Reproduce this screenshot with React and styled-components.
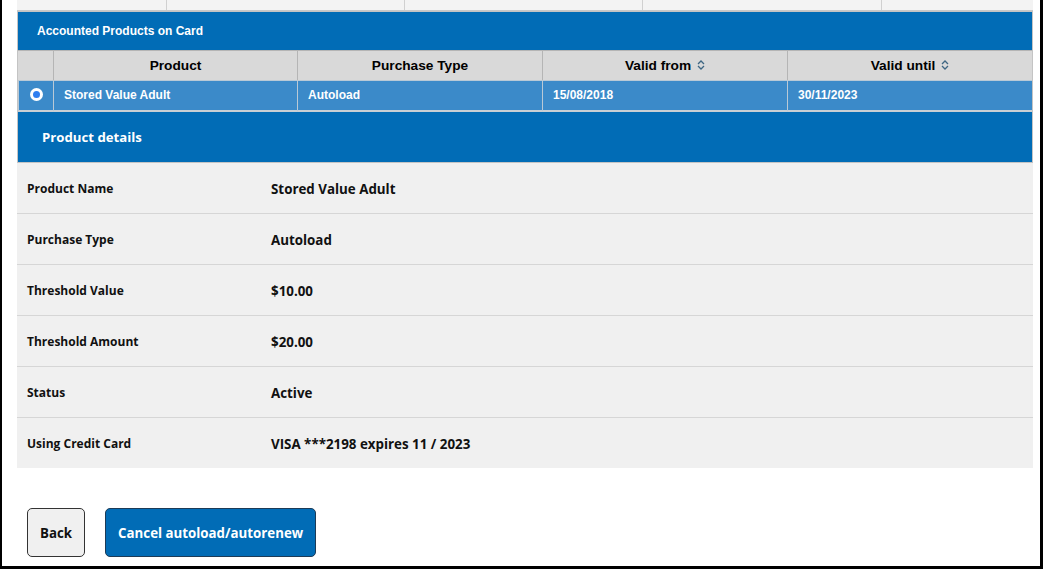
import React from "react";
import styled, { createGlobalStyle } from "styled-components";

const GlobalStyle = createGlobalStyle`
  html, body {
    margin: 0;
    padding: 0;
    background: #fff;
  }
`;

// Frame around the shot
const Frame = styled.div`
  width: 1043px;
  height: 569px;
  box-sizing: border-box;
  border-left: 2px solid #000;
  border-right: 3px solid #000;
  border-bottom: 3px solid #000;
  padding: 0 7px 0 15px;
  overflow: hidden;
  background: #fff;
`;

const TopStrip = styled.div`
  display: grid;
  grid-template-columns: 150px 238px 238px 239px 1fr;
  height: 10px;
  border-bottom: 1px solid #c8c8c8;
  background: #f3f3f3;
`;

const StripCell = styled.div`
  border-right: 1px solid #d0d0d0;
  &:last-child {
    border-right: none;
  }
`;

const Panel = styled.div`
  border: 1px solid #c4c4c4;
  font-family: "Liberation Sans", Arial, sans-serif;
`;

const PanelHeader = styled.div`
  height: 38px;
  display: flex;
  align-items: center;
  padding: 0 0 1px 19px;
  box-sizing: border-box;
  background: #016cb6;
  color: #fff;
  font-size: 12px;
  font-weight: bold;
`;

const Table = styled.div`
  display: grid;
  grid-template-columns: 35px 244px 245px 245px 1fr;
`;

const HeadCell = styled.div`
  height: 30px;
  box-sizing: border-box;
  padding-bottom: 1px;
  display: flex;
  align-items: center;
  justify-content: center;
  gap: 6px;
  background: #d9d9d9;
  border-top: 1px solid #b5b5b5;
  border-left: 1px solid #b5b5b5;
  font-size: 13.7px;
  font-weight: bold;
  color: #000;
  &:first-child {
    border-left: none;
  }
`;

const BodyCell = styled.div`
  height: 27px;
  padding-bottom: 2px;
  display: flex;
  align-items: center;
  justify-content: ${(p) => (p.center ? "center" : "flex-start")};
  padding-left: ${(p) => (p.center ? "0" : "10px")};
  background: #3b8ac9;
  border-top: 1px solid #b9c9d6;
  border-left: 1px solid #b9c9d6;
  border-bottom: 2px solid #c9cfd4;
  color: #fff;
  font-size: 12px;
  font-weight: bold;
  &:first-child {
    border-left: none;
  }
`;

const Radio = styled.span`
  width: 13px;
  height: 13px;
  border-radius: 50%;
  background: #fff;
  display: flex;
  align-items: center;
  justify-content: center;
  &::after {
    content: "";
    width: 7px;
    height: 7px;
    border-radius: 50%;
    background: #2f7ff0;
  }
`;

const DetailsHeader = styled.div`
  height: 50px;
  display: flex;
  align-items: center;
  padding-left: 24px;
  background: #016cb6;
  color: #fff;
  font-family: "Open Sans", "Noto Sans", sans-serif;
  font-size: 13.2px;
  font-weight: bold;
`;

const Details = styled.div`
  background: #f0f0f0;
  font-family: "Open Sans", "Noto Sans", sans-serif;
  color: #111;
`;

const DetailRow = styled.div`
  height: 50px;
  display: grid;
  grid-template-columns: 244px 1fr;
  align-items: center;
  padding-left: 10px;
  border-top: 1px solid #d6d6d6;
  &:first-child {
    border-top: none;
  }
`;

const Label = styled.div`
  font-size: 12px;
  font-weight: bold;
`;

const Value = styled.div`
  font-size: 13.35px;
  font-weight: bold;
  padding-top: 2px;
`;

const Actions = styled.div`
  display: flex;
  gap: 20px;
  padding: 40px 0 0 10px;
`;

const Button = styled.button`
  height: 49px;
  padding: 0 12px;
  border-radius: 5px;
  border: 1px solid ${(p) => (p.primary ? "#1d3b57" : "#333")};
  background: ${(p) => (p.primary ? "#016cb6" : "#f0f0f0")};
  color: ${(p) => (p.primary ? "#fff" : "#111")};
  font-family: "Open Sans", "Noto Sans", sans-serif;
  font-size: 13.3px;
  font-weight: bold;
  cursor: pointer;
`;

const SortIcon = () => (
  <svg width="8" height="10" viewBox="0 0 8 10" fill="none">
    <path d="M1 4 L4 1 L7 4" stroke="#3d6582" strokeWidth="1.3" />
    <path d="M1 6 L4 9 L7 6" stroke="#3d6582" strokeWidth="1.3" />
  </svg>
);

const details = [
  ["Product Name", "Stored Value Adult"],
  ["Purchase Type", "Autoload"],
  ["Threshold Value", "$10.00"],
  ["Threshold Amount", "$20.00"],
  ["Status", "Active"],
  ["Using Credit Card", "VISA ***2198 expires 11 / 2023"],
];

function App() {
  return (
    <>
      <GlobalStyle />
      <Frame>
        <TopStrip>
          <StripCell />
          <StripCell />
          <StripCell />
          <StripCell />
          <StripCell />
        </TopStrip>
        <Panel>
          <PanelHeader>Accounted Products on Card</PanelHeader>
          <Table>
            <HeadCell />
            <HeadCell>Product</HeadCell>
            <HeadCell>Purchase Type</HeadCell>
            <HeadCell>
              Valid from <SortIcon />
            </HeadCell>
            <HeadCell>
              Valid until <SortIcon />
            </HeadCell>
            <BodyCell center>
              <Radio />
            </BodyCell>
            <BodyCell>Stored Value Adult</BodyCell>
            <BodyCell>Autoload</BodyCell>
            <BodyCell>15/08/2018</BodyCell>
            <BodyCell>30/11/2023</BodyCell>
          </Table>
          <DetailsHeader>Product details</DetailsHeader>
        </Panel>
        <Details>
          {details.map(([label, value]) => (
            <DetailRow key={label}>
              <Label>{label}</Label>
              <Value>{value}</Value>
            </DetailRow>
          ))}
        </Details>
        <Actions>
          <Button>Back</Button>
          <Button primary>Cancel autoload/autorenew</Button>
        </Actions>
      </Frame>
    </>
  );
}

export default App;
